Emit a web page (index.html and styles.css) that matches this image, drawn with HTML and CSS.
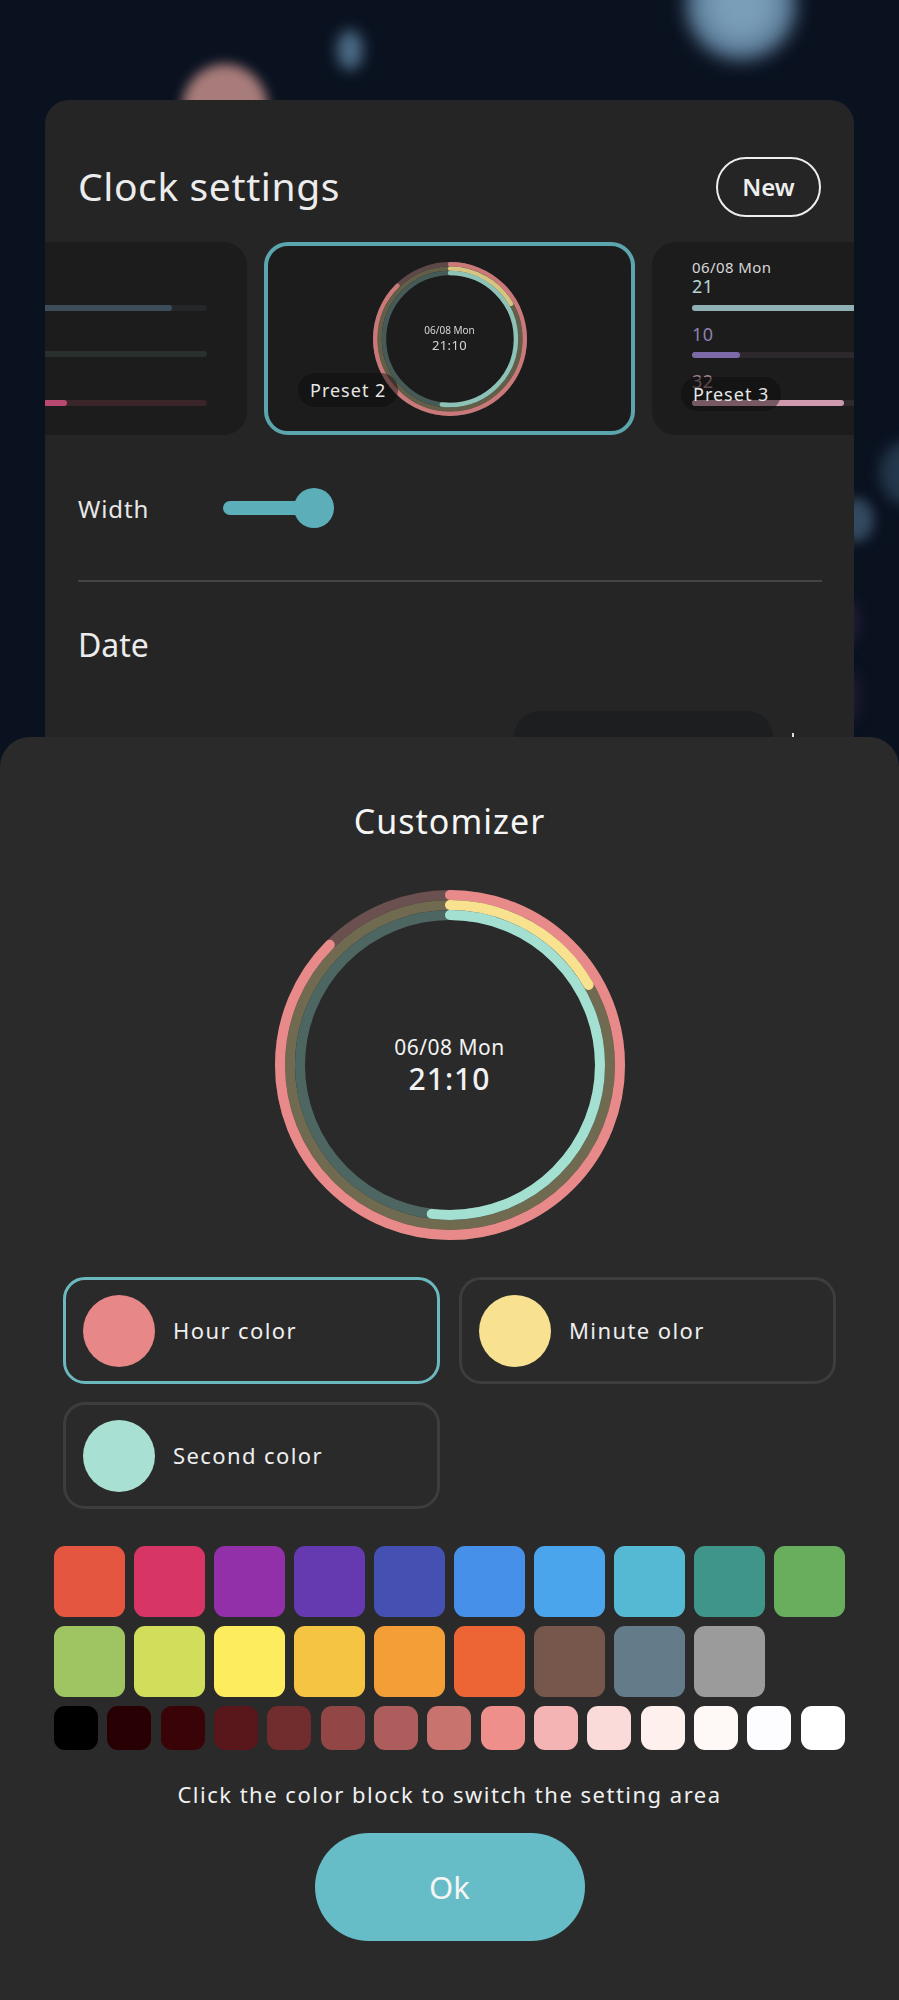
FILE: index.html
```html
<!DOCTYPE html>
<html lang="en">
<head>
<meta charset="utf-8">
<title>Clock settings</title>
<link rel="stylesheet" href="styles.css">
</head>
<body>
<svg class="defs" width="0" height="0" aria-hidden="true">
  <symbol id="rings" viewBox="0 0 350 350">
    <circle class="track track-h" cx="175" cy="175" r="170"/>
    <circle class="track track-m" cx="175" cy="175" r="160"/>
    <circle class="track track-s" cx="175" cy="175" r="150"/>
    <circle class="arc arc-h" cx="175" cy="175" r="170" pathLength="360" stroke-dasharray="315 360" transform="rotate(-90 175 175)"/>
    <circle class="arc arc-m" cx="175" cy="175" r="160" pathLength="360" stroke-dasharray="60 360" transform="rotate(-90 175 175)"/>
    <circle class="arc arc-s" cx="175" cy="175" r="150" pathLength="360" stroke-dasharray="187 360" transform="rotate(-90 175 175)"/>
  </symbol>
</svg>
<div class="page">
  <div class="blob blob-pink"></div>
  <div class="blob blob-sky"></div>
  <div class="blob blob-small"></div>
  <div class="blob blob-right1"></div>
  <div class="blob blob-right2"></div>
  <div class="blob blob-right3"></div>
  <div class="blob blob-right4"></div>

  <section class="settings">
    <header class="settings-head">
      <h1 class="settings-title">Clock settings</h1>
      <button class="btn-new">New</button>
    </header>
    <div class="presets">
      <article class="preset preset-side">
        <div class="bars bars-left">
          <div class="bar bar-a"><span class="fill fill-a"></span></div>
          <div class="bar bar-b"></div>
          <div class="bar bar-c"><span class="fill fill-c"></span></div>
        </div>
      </article>
      <article class="preset preset-active">
        <div class="clock clock-small">
          <svg class="rings" viewBox="0 0 350 350"><use href="#rings"/></svg>
          <div class="clock-text">
            <div class="clock-date">06/08 Mon</div>
            <div class="clock-time">21:10</div>
          </div>
        </div>
        <span class="preset-label label-2">Preset 2</span>
      </article>
      <article class="preset preset-side preset-third">
        <div class="stats">
          <div class="stat-date">06/08 Mon</div>
          <div class="stat-num num-1">21</div>
          <div class="bar bar-d"><span class="fill fill-d"></span></div>
          <div class="stat-num num-2">10</div>
          <div class="bar bar-e"><span class="fill fill-e"></span></div>
          <div class="stat-num num-3">32</div>
          <div class="bar bar-f"><span class="fill fill-f"></span></div>
        </div>
        <span class="preset-label label-3">Preset 3</span>
      </article>
    </div>
    <div class="width-row">
      <span class="width-label">Width</span>
      <div class="slider"><span class="slider-track"></span><span class="slider-thumb"></span></div>
    </div>
    <div class="divider"></div>
    <h2 class="date-title">Date</h2>
    <div class="date-row">
      <div class="select-box"></div>
      <span class="tick"></span>
    </div>
  </section>

  <section class="sheet">
    <h2 class="sheet-title">Customizer</h2>
    <div class="clock clock-big">
      <svg class="rings" viewBox="0 0 350 350"><use href="#rings"/></svg>
      <div class="clock-text">
        <div class="clock-date">06/08 Mon</div>
        <div class="clock-time">21:10</div>
      </div>
    </div>
    <div class="targets">
      <div class="target target-active"><span class="dot dot-h"></span><span class="target-name">Hour color</span></div>
      <div class="target"><span class="dot dot-m"></span><span class="target-name">Minute olor</span></div>
      <div class="target"><span class="dot dot-s"></span><span class="target-name">Second color</span></div>
    </div>
    <div class="palette">
      <div class="swatches row-1">
        <span></span><span></span><span></span><span></span><span></span><span></span><span></span><span></span><span></span><span></span>
      </div>
      <div class="swatches row-2">
        <span></span><span></span><span></span><span></span><span></span><span></span><span></span><span></span><span></span>
      </div>
      <div class="swatches row-3">
        <span></span><span></span><span></span><span></span><span></span><span></span><span></span><span></span><span></span><span></span><span></span><span></span><span></span><span></span><span></span>
      </div>
    </div>
    <p class="hint">Click the color block to switch the setting area</p>
    <button class="btn-ok">Ok</button>
  </section>
</div>
</body>
</html>
```

FILE: styles.css
```css
* { box-sizing: border-box; }
html, body { margin: 0; padding: 0; }
body { background: #0a1220; font-family: "Noto Sans", "DejaVu Sans", sans-serif; color: #eee; }
.defs { position: absolute; }
.page { position: relative; width: 899px; height: 2000px; overflow: hidden; padding-top: 100px; background: #0a1220; }

.blob { position: absolute; border-radius: 50%; }
.blob-pink { left: 182px; top: 64px; width: 86px; height: 90px; background: #a87c7a; filter: blur(6px); }
.blob-sky { left: 686px; top: -50px; width: 110px; height: 110px; background: radial-gradient(circle, #7a9db8 30%, #4f6f8b 75%); filter: blur(9px); }
.blob-small { left: 337px; top: 30px; width: 26px; height: 40px; background: #4a6a84; filter: blur(7px); }
.blob-right1 { left: 838px; top: 498px; width: 36px; height: 44px; background: #33495f; filter: blur(6px); }
.blob-right2 { left: 880px; top: 442px; width: 50px; height: 62px; background: #24384b; filter: blur(7px); }
.blob-right3 { left: 838px; top: 600px; width: 22px; height: 44px; background: #211c34; filter: blur(6px); }
.blob-right4 { left: 838px; top: 672px; width: 22px; height: 50px; background: #221b2e; filter: blur(7px); }

.settings { position: relative; margin-left: 45px; width: 809px; height: 667px; background: #252525; border-radius: 24px 24px 0 0; overflow: hidden; }
.settings-head { display: flex; justify-content: space-between; align-items: center; padding: 57px 33px 25px 33px; }
.settings-title { margin: -3px 0 0; font-size: 39px; font-weight: 400; line-height: 60px; color: #ececec; letter-spacing: .6px; }
.btn-new { width: 105px; height: 60px; padding: 0 0 2px; border: 2px solid #eee; border-radius: 30px; background: transparent; color: #eee; font: 600 24px "Noto Sans", sans-serif; }

.presets { display: flex; gap: 17px; margin-left: -169px; width: 1200px; }
.preset { position: relative; width: 371px; height: 193px; flex: none; background: #1c1c1d; border-radius: 24px; }
.preset-active { border: 4px solid #5ba6ae; display: flex; justify-content: center; align-items: center; }
.preset-label { position: absolute; display: flex; align-items: center; height: 34px; border-radius: 17px; background: rgba(10,10,10,.45); color: #e6e6e6; font-size: 18px; letter-spacing: 1px; white-space: nowrap; }
.label-2 { left: 30px; top: 127px; padding: 0 12px; width: 100px; }
.label-3 { left: 29px; top: 135px; padding: 0 12px; width: 100px; }

.bar { height: 6px; border-radius: 3px; }
.fill { display: block; height: 100%; border-radius: 3px; }
.bars { padding: 63px 40px 0 0; display: flex; flex-direction: column; gap: 40px; }
.bars-left { padding-left: 40px; }
.bar-a { background: #24282b; }
.fill-a { width: 88%; background: #3d4d5a; }
.bar-b { background: #29302e; }
.bar-c { background: #3a2529; margin-top: 3px; }
.fill-c { width: 52%; background: #b84a72; }

.preset-third { width: 260px; }
.stats { padding: 16px 0 0 40px; }
.stat-date { font-size: 15px; line-height: 18px; color: #d8d8d8; letter-spacing: .4px; }
.stat-num { font-size: 18px; line-height: 22px; letter-spacing: .5px; }
.num-1 { color: #b6d6d6; margin-top: -1px; }
.num-2 { color: #8e80b0; margin-top: 12px; }
.num-3 { color: #a08088; margin-top: 12px; }
.bar-d { margin-top: 8px; background: #2f3638; }
.fill-d { width: 100%; background: #8fb0b5; }
.bar-e { margin-top: 7px; background: #2c282c; }
.fill-e { width: 22%; background: #7c6ba8; }
.bar-f { margin-top: 8px; background: #2e2a2c; }
.fill-f { width: 69%; background: #d09aae; }

.clock { display: grid; place-items: center; }
.rings, .clock-text { grid-area: 1 / 1; }
.rings { display: block; width: 100%; height: 100%; }
.clock-text { text-align: center; color: #f2f2f2; }
.clock-small { width: 154px; height: 154px; opacity: .85; }
.clock-small .clock-date { font-size: 10px; line-height: 13px; }
.clock-small .clock-time { font-size: 13px; line-height: 16px; letter-spacing: .4px; }
.clock-big { width: 350px; height: 350px; margin: 41px auto 0; }
.clock-big .clock-date { font-size: 21px; line-height: 28px; letter-spacing: .5px; }
.clock-big .clock-time { font-size: 30px; line-height: 36px; font-weight: 500; letter-spacing: 1px; }

.track, .arc { fill: none; stroke-width: 10; }
.arc { stroke-linecap: round; }
.track-h { stroke: #6b5050; }
.track-m { stroke: #6f6a50; }
.track-s { stroke: #4e6662; }
.arc-h { stroke: #e88a8a; }
.arc-m { stroke: #f8e290; }
.arc-s { stroke: #a4e0d2; }

.width-row { display: flex; align-items: center; margin-top: 48px; padding-left: 33px; height: 50px; }
.width-label { width: 145px; font-size: 24px; letter-spacing: .9px; color: #e8e8e8; }
.slider { display: flex; align-items: center; }
.slider-track { width: 80px; height: 14px; border-radius: 7px 0 0 7px; background: #5cafb8; }
.slider-thumb { width: 40px; height: 40px; margin-left: -9px; border-radius: 50%; background: #5cafb8; }
.divider { height: 2px; margin: 47px 32px 0 33px; background: #444; }
.date-title { margin: 40px 0 0 33px; font-size: 32px; font-weight: 400; line-height: 46px; color: #ececec; }
.date-row { display: flex; align-items: flex-start; margin-top: 43px; padding-left: 469px; }
.select-box { width: 259px; height: 60px; border-radius: 26px; background: #1d1e1f; }
.tick { width: 2px; height: 4px; margin: 22px 0 0 19px; background: #ddd; }

.sheet { position: relative; margin-top: -30px; height: 1263px; padding-top: 56px; background: #2a2a2a; border-radius: 30px 30px 0 0; }
.sheet-title { margin: 0; text-align: center; font-size: 34px; font-weight: 400; line-height: 56px; color: #f5f5f5; letter-spacing: 1px; }
.targets { display: grid; grid-template-columns: 377px 377px; column-gap: 19px; row-gap: 18px; margin: 37px 0 0 63px; }
.target { display: flex; align-items: center; height: 107px; padding-left: 17px; border: 3px solid #3d3d3d; border-radius: 22px; }
.target-active { border-color: #6bb8bf; }
.dot { width: 72px; height: 72px; border-radius: 50%; margin-right: 18px; flex: none; }
.dot-h { background: #e78787; }
.dot-m { background: #f8e292; }
.dot-s { background: #a8e0d3; }
.target-name { font-size: 22px; line-height: 30px; padding-bottom: 2px; letter-spacing: 1.4px; color: #eee; }

.palette { margin: 37px 54px 0; display: flex; flex-direction: column; gap: 9px; }
.swatches { display: flex; justify-content: space-between; }
.swatches span { flex: none; border-radius: 11px; }
.row-1 span, .row-2 span { width: 71px; height: 71px; }
.row-2 { justify-content: flex-start; gap: 9px; }
.row-3 span { width: 44px; height: 44px; }
.row-1 span:nth-child(1) { background: #e45640; }
.row-1 span:nth-child(2) { background: #d63565; }
.row-1 span:nth-child(3) { background: #9130a8; }
.row-1 span:nth-child(4) { background: #6539b0; }
.row-1 span:nth-child(5) { background: #4450b2; }
.row-1 span:nth-child(6) { background: #4690ea; }
.row-1 span:nth-child(7) { background: #4aa5ed; }
.row-1 span:nth-child(8) { background: #55b9d4; }
.row-1 span:nth-child(9) { background: #40958a; }
.row-1 span:nth-child(10) { background: #68ae5d; }
.row-2 span:nth-child(1) { background: #9ec562; }
.row-2 span:nth-child(2) { background: #d0de5c; }
.row-2 span:nth-child(3) { background: #feec5f; }
.row-2 span:nth-child(4) { background: #f5c442; }
.row-2 span:nth-child(5) { background: #f39e37; }
.row-2 span:nth-child(6) { background: #ee6535; }
.row-2 span:nth-child(7) { background: #77574c; }
.row-2 span:nth-child(8) { background: #647c89; }
.row-2 span:nth-child(9) { background: #9b9b9b; }
.row-3 span:nth-child(1) { background: #000000; }
.row-3 span:nth-child(2) { background: #280003; }
.row-3 span:nth-child(3) { background: #3a0308; }
.row-3 span:nth-child(4) { background: #59171b; }
.row-3 span:nth-child(5) { background: #712c2e; }
.row-3 span:nth-child(6) { background: #924646; }
.row-3 span:nth-child(7) { background: #ad5d5c; }
.row-3 span:nth-child(8) { background: #c9736f; }
.row-3 span:nth-child(9) { background: #ef8f8c; }
.row-3 span:nth-child(10) { background: #f5b4b4; }
.row-3 span:nth-child(11) { background: #fadbd9; }
.row-3 span:nth-child(12) { background: #fdf0ed; }
.row-3 span:nth-child(13) { background: #fef9f7; }
.row-3 span:nth-child(14) { background: #fdfcff; }
.row-3 span:nth-child(15) { background: #ffffff; }

.hint { margin: 27px 0 0; text-align: center; font-size: 22px; line-height: 34px; letter-spacing: 1.5px; color: #f0f0f0; }
.btn-ok { display: block; width: 270px; height: 108px; margin: 22px auto 0; border: 0; border-radius: 54px; background: #67bdc7; color: #f5f5f5; font: 400 31px "Noto Sans", sans-serif; }
```
